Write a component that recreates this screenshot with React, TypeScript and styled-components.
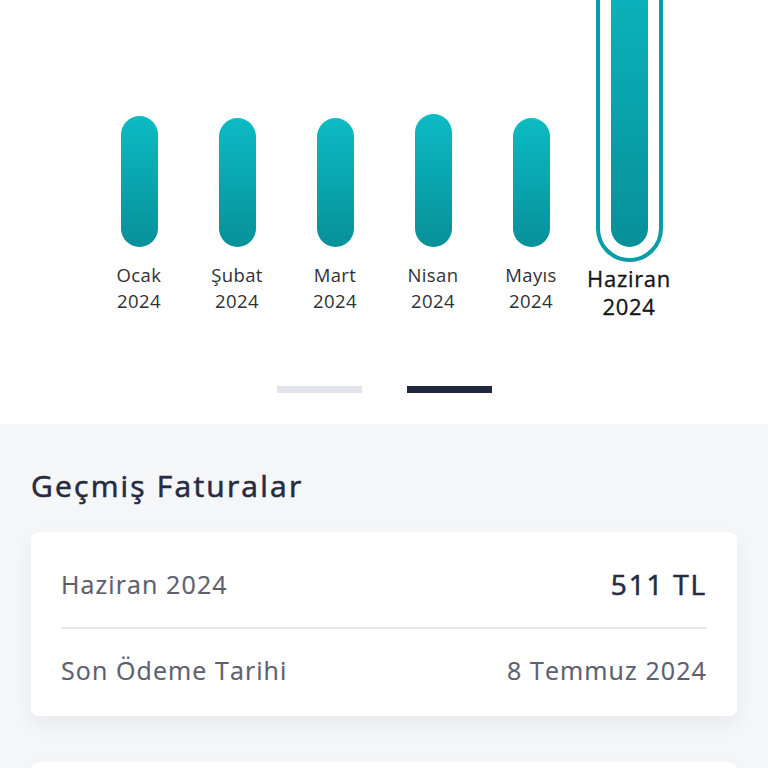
import React from 'react';
import styled, { createGlobalStyle } from 'styled-components';

const GlobalStyle = createGlobalStyle`
  html, body {
    margin: 0;
    padding: 0;
    background: #ffffff;
    font-family: 'Open Sans', 'Noto Sans', sans-serif;
  }
`;

const Page = styled.div`
  width: 768px;
  height: 768px;
  overflow: hidden;
  display: flex;
  flex-direction: column;
`;

const ChartSection = styled.section`
  height: 424px;
  flex-shrink: 0;
  background: #ffffff;
  overflow: hidden;
  display: flex;
  flex-direction: column;
  align-items: center;
`;

const Chart = styled.div`
  display: flex;
  align-items: flex-start;
`;

const Column = styled.div`
  width: 98px;
  display: flex;
  flex-direction: column;
  align-items: center;
`;

const BarSlot = styled.div`
  height: 262px;
  display: flex;
  align-items: flex-end;
  justify-content: center;
`;

const Ring = styled.div<{ $active: boolean }>`
  width: 67px;
  box-sizing: border-box;
  padding: 11px;
  border: 4px solid ${(p) => (p.$active ? '#0a9da7' : 'transparent')};
  border-radius: 34px;
  display: flex;
  justify-content: center;
`;

const Bar = styled.div`
  width: 37px;
  border-radius: 19px;
  background: linear-gradient(180deg, #0cbbc3 0%, #07909a 100%);
`;

const Label = styled.div<{ $active: boolean }>`
  margin-top: ${(p) => (p.$active ? '2px' : '0px')};
  text-align: center;
  white-space: nowrap;
  font-size: ${(p) => (p.$active ? '22px' : '18.5px')};
  line-height: ${(p) => (p.$active ? '28px' : '26px')};
  letter-spacing: ${(p) => (p.$active ? '0.7px' : '0.4px')};
  color: ${(p) => (p.$active ? '#111318' : '#2f3136')};
  -webkit-text-stroke: ${(p) => (p.$active ? '0.3px #111318' : '0')};
`;

const Pager = styled.div`
  margin-top: 66px;
  display: flex;
  gap: 45px;
`;

const Dot = styled.div<{ $active: boolean }>`
  width: 85px;
  height: 7px;
  background: ${(p) => (p.$active ? '#1f2740' : '#e2e4ec')};
`;

const History = styled.section`
  flex: 1;
  background: #f5f6f8;
  padding: 44px 31px 0;
`;

const Title = styled.h2`
  margin: 0;
  font-size: 30px;
  line-height: 36px;
  font-weight: 400;
  letter-spacing: 2.2px;
  color: #262b40;
  -webkit-text-stroke: 0.6px #262b40;
`;

const Card = styled.div`
  margin-top: 28px;
  background: #ffffff;
  border-radius: 8px;
  padding: 0 30px;
  box-shadow: 0 8px 20px rgba(30, 40, 60, 0.06);
  margin-bottom: 46px;
`;

const Row = styled.div<{ $divider?: boolean }>`
  box-sizing: border-box;
  display: flex;
  align-items: center;
  justify-content: space-between;
  height: ${(p) => (p.$divider ? '97px' : '87px')};
  padding: ${(p) => (p.$divider ? '9px 0 0' : '0 0 5px')};
  border-bottom: ${(p) => (p.$divider ? '2px solid #e6e7eb' : 'none')};
`;

const Muted = styled.span`
  font-size: 25px;
  line-height: 30px;
  letter-spacing: 1.1px;
  color: #5c606e;
  -webkit-text-stroke: 0.2px #5c606e;
`;

const Amount = styled.span`
  font-size: 28px;
  line-height: 30px;
  font-weight: 400;
  letter-spacing: 1.8px;
  color: #262b40;
  -webkit-text-stroke: 0.6px #262b40;
`;

const months = [
  { name: 'Ocak', h: 131 },
  { name: 'Şubat', h: 129 },
  { name: 'Mart', h: 129 },
  { name: 'Nisan', h: 133 },
  { name: 'Mayıs', h: 129 },
  { name: 'Haziran', h: 320, active: true },
];

const App: React.FC = () => (
  <Page>
    <GlobalStyle />
    <ChartSection>
      <Chart>
        {months.map((m) => (
          <Column key={m.name}>
            <BarSlot>
              <Ring $active={!!m.active}>
                <Bar style={{ height: m.h }} />
              </Ring>
            </BarSlot>
            <Label $active={!!m.active}>
              {m.name}
              <br />
              2024
            </Label>
          </Column>
        ))}
      </Chart>
      <Pager>
        <Dot $active={false} />
        <Dot $active />
      </Pager>
    </ChartSection>
    <History>
      <Title>Geçmiş Faturalar</Title>
      <Card>
        <Row $divider>
          <Muted>Haziran 2024</Muted>
          <Amount>511 TL</Amount>
        </Row>
        <Row>
          <Muted>Son Ödeme Tarihi</Muted>
          <Muted>8 Temmuz 2024</Muted>
        </Row>
      </Card>
      <Card>
        <Row $divider />
      </Card>
    </History>
  </Page>
);

export default App;
